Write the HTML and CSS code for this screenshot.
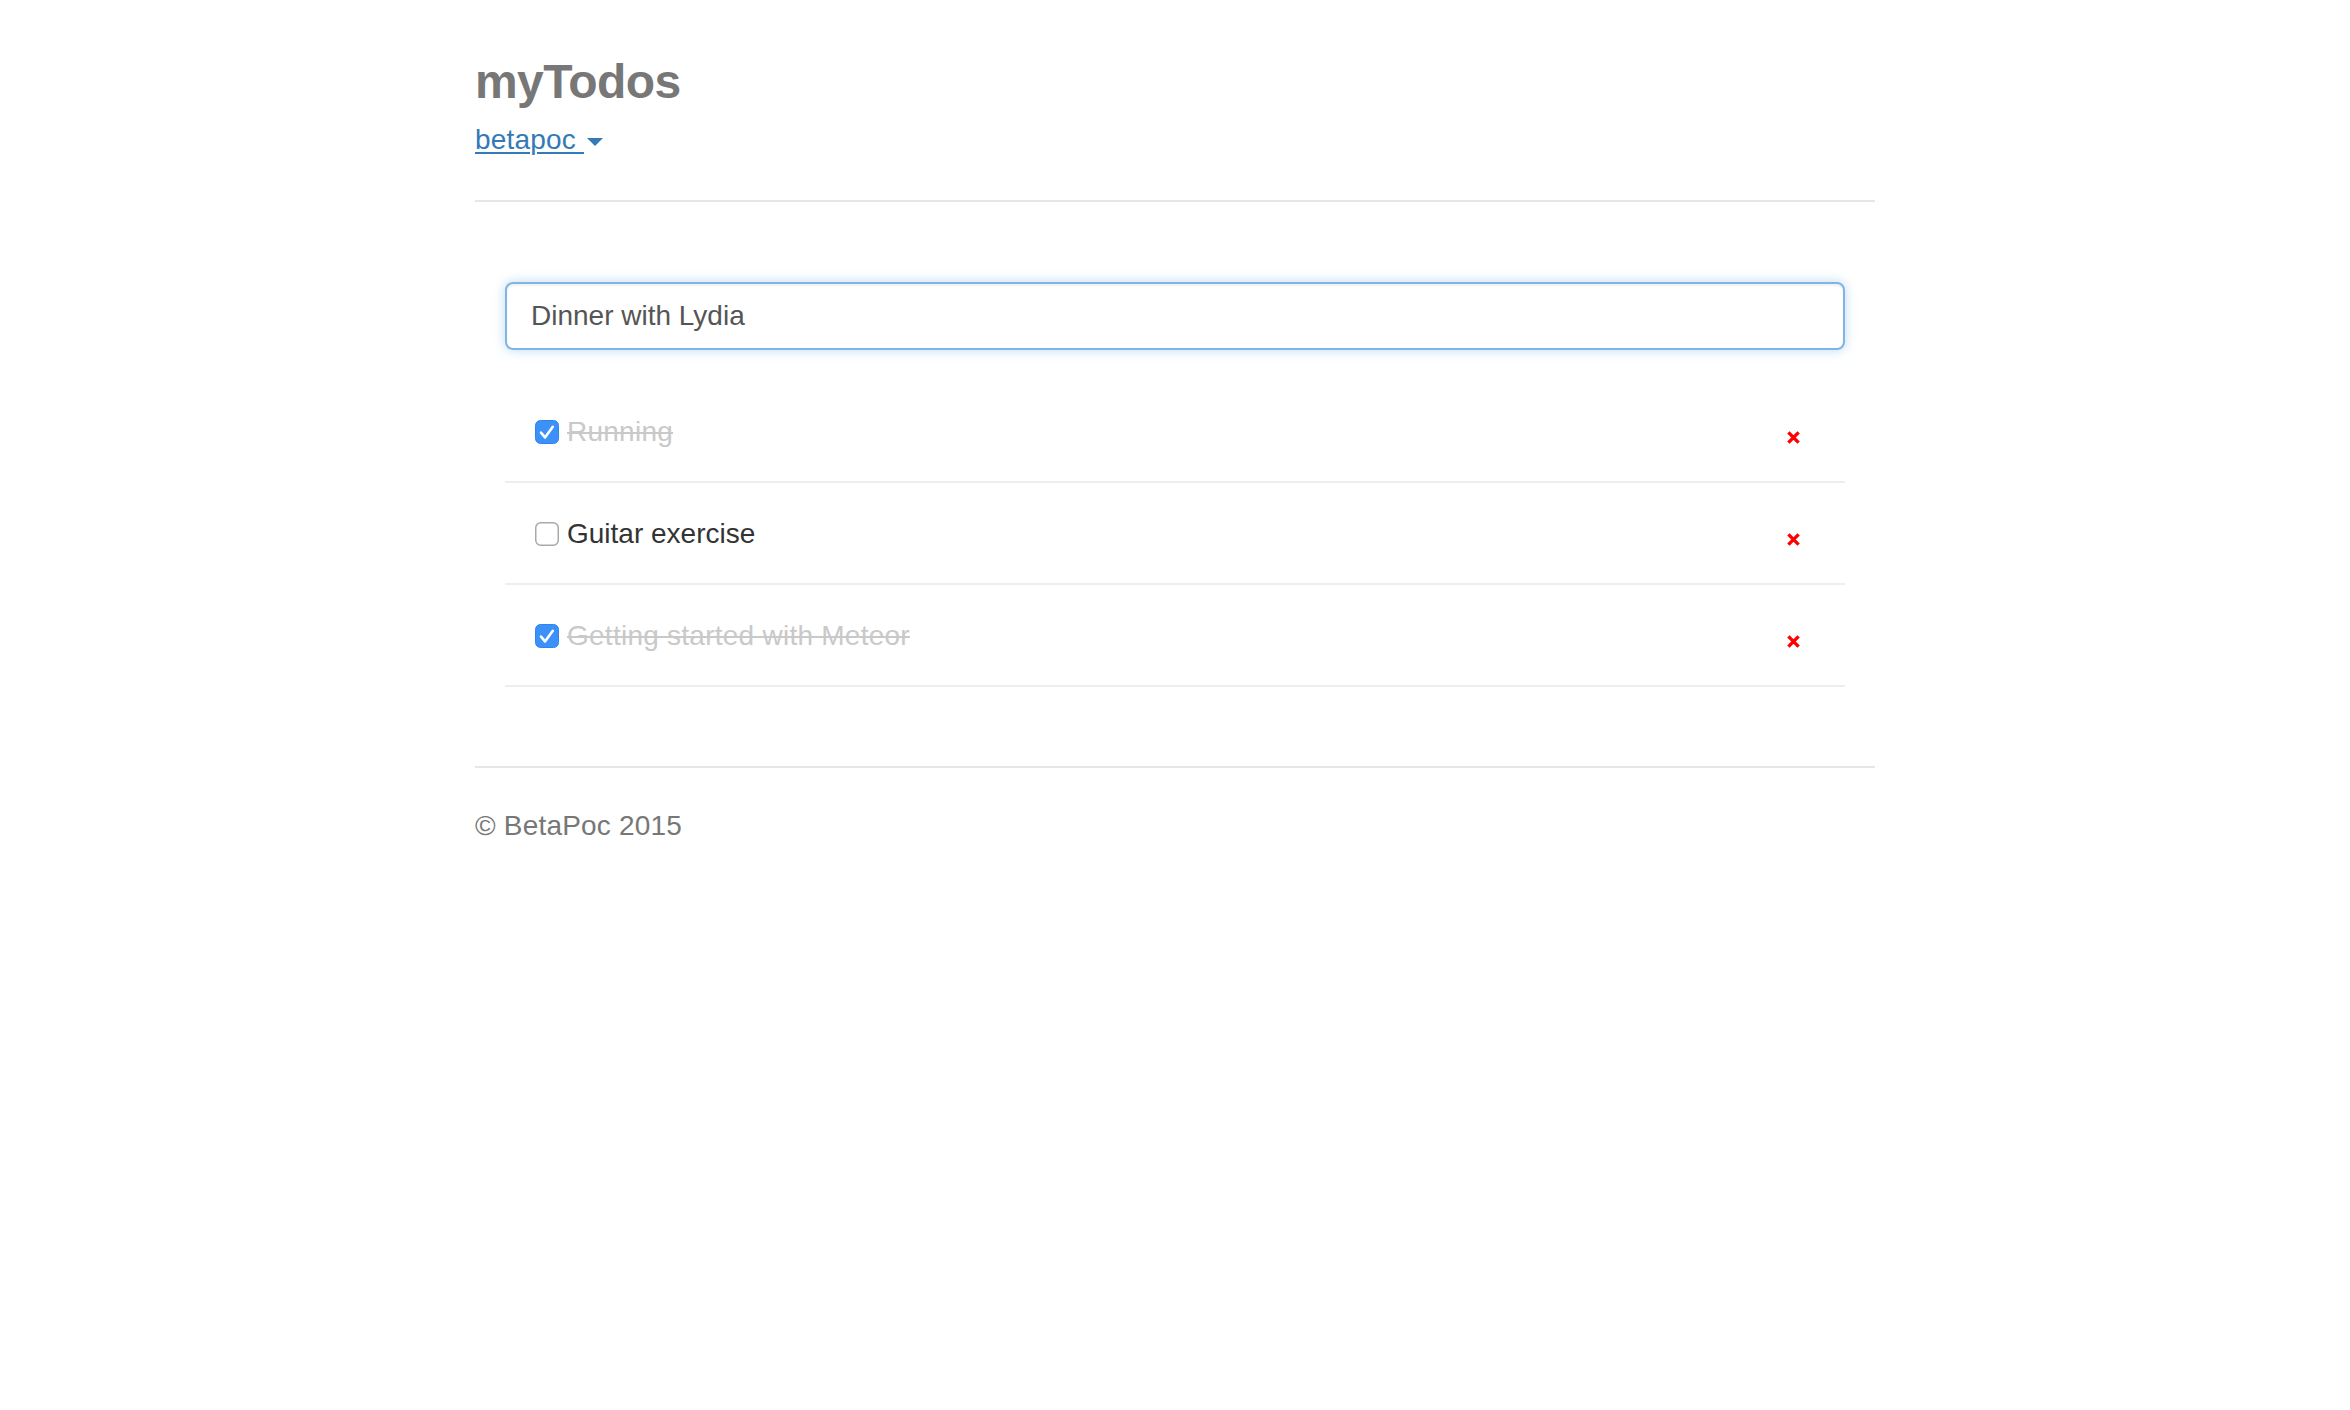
FILE: index.html
```html
<!DOCTYPE html>
<html lang="en">
<head>
<meta charset="utf-8">
<title>myTodos</title>
<link rel="stylesheet" href="styles.css">
</head>
<body>
<div class="container">
  <header class="header">
    <h1 class="brand">myTodos</h1>
    <a class="user-link" href="#">betapoc <span class="caret"></span></a>
  </header>
  <hr class="rule">
  <main class="main">
    <input class="new-task" type="text" value="Dinner with Lydia">
    <ul class="tasks">
      <li class="task done">
        <span class="check">
          <svg width="24" height="24" viewBox="0 0 24 24"><rect x="0.5" y="0.5" width="23" height="23" rx="5" fill="#3b91f7" stroke="#2f84ee"/><path d="M6 12.6 L10 17.4 L17.8 6.8" stroke="#fff" stroke-width="2.6" fill="none" stroke-linecap="round" stroke-linejoin="round"/></svg>
        </span>
        <span class="task-text">Running</span>
        <span class="remove"><svg width="13" height="13" viewBox="0 0 13 13"><path d="M1.4 1.4 L11.6 11.6 M11.6 1.4 L1.4 11.6" stroke="#ff0000" stroke-width="3.4" fill="none"/></svg></span>
      </li>
      <li class="task">
        <span class="check">
          <svg width="24" height="24" viewBox="0 0 24 24"><rect x="0.75" y="0.75" width="22.5" height="22.5" rx="5" fill="#fff" stroke="#a9a9a9" stroke-width="1.5"/></svg>
        </span>
        <span class="task-text">Guitar exercise</span>
        <span class="remove"><svg width="13" height="13" viewBox="0 0 13 13"><path d="M1.4 1.4 L11.6 11.6 M11.6 1.4 L1.4 11.6" stroke="#ff0000" stroke-width="3.4" fill="none"/></svg></span>
      </li>
      <li class="task done">
        <span class="check">
          <svg width="24" height="24" viewBox="0 0 24 24"><rect x="0.5" y="0.5" width="23" height="23" rx="5" fill="#3b91f7" stroke="#2f84ee"/><path d="M6 12.6 L10 17.4 L17.8 6.8" stroke="#fff" stroke-width="2.6" fill="none" stroke-linecap="round" stroke-linejoin="round"/></svg>
        </span>
        <span class="task-text">Getting started with Meteor</span>
        <span class="remove"><svg width="13" height="13" viewBox="0 0 13 13"><path d="M1.4 1.4 L11.6 11.6 M11.6 1.4 L1.4 11.6" stroke="#ff0000" stroke-width="3.4" fill="none"/></svg></span>
      </li>
    </ul>
  </main>
  <hr class="rule footer-rule">
  <footer class="footer">© BetaPoc 2015</footer>
</div>
</body>
</html>
```

FILE: styles.css
```css
* {
  box-sizing: border-box;
}

html, body {
  margin: 0;
  padding: 0;
  background: #fff;
}

body {
  font-family: "Liberation Sans", Arial, Helvetica, sans-serif;
  font-size: 28px;
  line-height: 40px;
  color: #333;
}

.container {
  width: 1400px;
  margin: 0 auto;
}

.header {
  display: flex;
  flex-direction: column;
  align-items: flex-start;
}

.brand {
  margin: 55px 0 0;
  font-size: 48px;
  line-height: 53px;
  font-weight: 700;
  letter-spacing: -0.6px;
  color: #777;
}

.user-link {
  margin-top: 12px;
  color: #337ab7;
  text-decoration: underline;
  text-decoration-thickness: 2px;
  text-underline-offset: 3px;
  line-height: 40px;
  letter-spacing: 0.2px;
}

.caret {
  display: inline-block;
  width: 0;
  height: 0;
  margin-left: 3px;
  vertical-align: middle;
  border-top: 8px solid #337ab7;
  border-left: 8px solid transparent;
  border-right: 8px solid transparent;
}

.rule {
  margin: 40px 0 0;
  border: 0;
  border-top: 2px solid #e6e6e6;
  height: 0;
}

.main {
  padding: 80px 30px 0;
}

.new-task {
  display: block;
  width: 100%;
  height: 68px;
  margin: 0;
  padding: 0 24px;
  font-family: "Liberation Sans", Arial, Helvetica, sans-serif;
  font-size: 28px;
  color: #555;
  background: #fff;
  border: 2px solid #7fb4e3;
  border-radius: 8px;
  box-shadow: inset 0 2px 2px rgba(0, 0, 0, 0.06), 0 0 12px rgba(102, 175, 233, 0.45);
  outline: none;
}

.tasks {
  list-style: none;
  margin: 31px 0 0;
  padding: 0;
}

.task {
  display: flex;
  align-items: center;
  height: 102px;
  padding: 2px 30px 0 30px;
  border-bottom: 2px solid #eee;
}

.check {
  display: flex;
  width: 24px;
  height: 24px;
  margin-right: 8px;
  flex: none;
}

.task-text {
  flex: 1;
  color: #333;
  line-height: 40px;
  white-space: nowrap;
}

.task.done .task-text {
  color: #c9c9c9;
  text-decoration: line-through;
  text-decoration-thickness: 2px;
  letter-spacing: 0.25px;
}

.remove {
  display: flex;
  width: 13px;
  height: 13px;
  margin: 10px 15px 0 0;
  flex: none;
}

.footer-rule {
  margin-top: 79px;
}

.footer {
  margin-top: 38px;
  color: #777;
  font-size: 28px;
  line-height: 40px;
  letter-spacing: 0.2px;
}
```
